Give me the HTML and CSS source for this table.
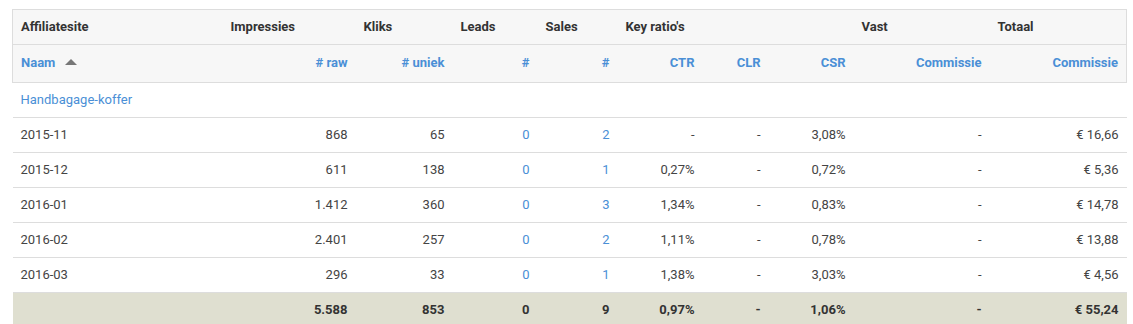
FILE: index.html
```html
<!DOCTYPE html>
<html>
<head>
<meta charset="utf-8">
<link rel="stylesheet" href="styles.css">
</head>
<body>
<div class="wrap">
<table class="stats">
  <colgroup>
    <col class="c-name"><col class="c-raw"><col class="c-uniek"><col class="c-leads"><col class="c-sales">
    <col class="c-ctr"><col class="c-clr"><col class="c-csr"><col class="c-vast"><col class="c-tot">
  </colgroup>
  <thead>
    <tr class="group">
      <th>Affiliatesite</th>
      <th>Impressies</th>
      <th>Kliks</th>
      <th>Leads</th>
      <th>Sales</th>
      <th colspan="3">Key ratio's</th>
      <th>Vast</th>
      <th>Totaal</th>
    </tr>
    <tr class="sub">
      <th class="left">Naam <span class="sort"></span></th>
      <th># raw</th>
      <th># uniek</th>
      <th>#</th>
      <th>#</th>
      <th>CTR</th>
      <th>CLR</th>
      <th>CSR</th>
      <th>Commissie</th>
      <th>Commissie</th>
    </tr>
  </thead>
  <tbody>
    <tr class="site"><td colspan="10"><a href="#">Handbagage-koffer</a></td></tr>
    <tr><td class="left">2015-11</td><td>868</td><td>65</td><td class="link">0</td><td class="link">2</td><td>-</td><td>-</td><td>3,08%</td><td>-</td><td>€ 16,66</td></tr>
    <tr><td class="left">2015-12</td><td>611</td><td>138</td><td class="link">0</td><td class="link">1</td><td>0,27%</td><td>-</td><td>0,72%</td><td>-</td><td>€ 5,36</td></tr>
    <tr><td class="left">2016-01</td><td>1.412</td><td>360</td><td class="link">0</td><td class="link">3</td><td>1,34%</td><td>-</td><td>0,83%</td><td>-</td><td>€ 14,78</td></tr>
    <tr><td class="left">2016-02</td><td>2.401</td><td>257</td><td class="link">0</td><td class="link">2</td><td>1,11%</td><td>-</td><td>0,78%</td><td>-</td><td>€ 13,88</td></tr>
    <tr><td class="left">2016-03</td><td>296</td><td>33</td><td class="link">0</td><td class="link">1</td><td>1,38%</td><td>-</td><td>3,03%</td><td>-</td><td>€ 4,56</td></tr>
  </tbody>
  <tfoot>
    <tr><td></td><td>5.588</td><td>853</td><td>0</td><td>9</td><td>0,97%</td><td>-</td><td>1,06%</td><td>-</td><td>€ 55,24</td></tr>
  </tfoot>
</table>
</div>
</body>
</html>
```
FILE: styles.css
```css
html, body {
  margin: 0;
  padding: 0;
  background: #fff;
}
.wrap {
  padding: 9px 7px 0 12px;
}
.stats {
  border-collapse: collapse;
  table-layout: fixed;
  width: 1114px;
  font-family: Roboto, "Liberation Sans", sans-serif;
  font-size: 13px;
  color: #333;
}
.c-name { width: 210px; }
.c-raw { width: 133px; }
.c-uniek { width: 97px; }
.c-leads { width: 85px; }
.c-sales { width: 80px; }
.c-ctr { width: 85px; }
.c-clr { width: 66px; }
.c-csr { width: 85px; }
.c-vast { width: 136px; }
.c-tot { width: 137px; }

.stats th, .stats td {
  padding: 0 8px 2px;
  white-space: nowrap;
}
.stats thead th {
  background: #f7f7f7;
  font-weight: 700;
}
.stats thead tr.group th {
  text-align: left;
  height: 32px;
  border-top: 1px solid #dddddd;
  border-bottom: 1px solid #dddddd;
  color: #333;
}
.stats thead tr.sub th {
  text-align: right;
  height: 35px;
  color: #4a8fd6;
  border-bottom: 1px solid #dddddd;
}
.stats thead tr th:first-child { border-left: 1px solid #dddddd; }
.stats thead tr th:last-child { border-right: 1px solid #dddddd; }
.stats thead tr.sub th.left { text-align: left; }

.sort {
  display: inline-block;
  width: 0;
  height: 0;
  margin-left: 6px;
  border-left: 6px solid transparent;
  border-right: 6px solid transparent;
  border-bottom: 6px solid #777;
  vertical-align: 2px;
}

.stats tbody td {
  text-align: right;
  height: 32px;
  border-bottom: 1px solid #dddddd;
  color: #444;
}
.stats tbody td.left { text-align: left; }
.stats tbody td.link { color: #4a8fd6; }
.stats tbody tr.site td { text-align: left; }
.stats tbody tr.site a {
  color: #4a8fd6;
  text-decoration: none;
}
.stats tfoot td {
  background: #dfdfd0;
  text-align: right;
  font-weight: 700;
  height: 33px;
  color: #333;
}
```
